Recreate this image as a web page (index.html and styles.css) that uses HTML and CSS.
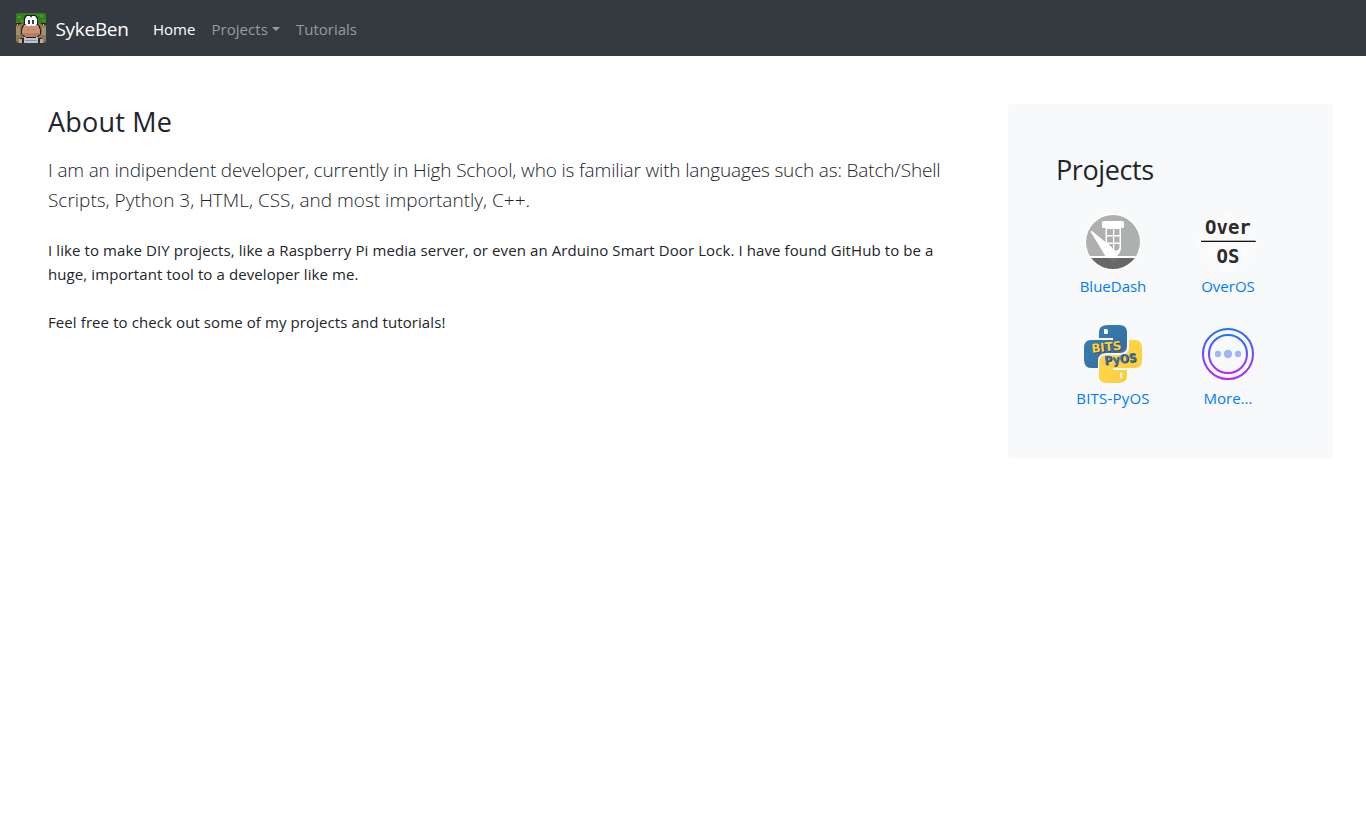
FILE: index.html
```html
<!DOCTYPE html>
<html lang="en">
<head>
<meta charset="utf-8">
<title>SykeBen</title>
<link rel="stylesheet" href="styles.css">
</head>
<body>
<nav class="navbar">
  <a class="brand">
    <svg class="avatar" width="30" height="30" viewBox="0 0 30 30">
      <defs><clipPath id="av"><rect width="30" height="30" rx="3"/></clipPath></defs>
      <g clip-path="url(#av)">
        <rect width="30" height="30" fill="#8a7a5c"/>
        <path d="M0 0H30V9L26 11H4L0 9Z" fill="#33801c"/>
        <path d="M2 3h3v2H2zM24 2h3v2h-3zM5 7h2v2H5zM20 2h3v1h-3zM26 7h3v1h-3z" fill="#4d9f29"/>
        <path d="M0 10h5v2H0zM25 10h5v2h-5z" fill="#29231c"/>
        <path d="M1 11h1v1H1zM27 11h1v1h-1z" fill="#ffe44b"/>
        <path d="M3 11h2v1H3zM25 11h1v1h-1z" fill="#f32b1f"/>
        <path d="M0 14h4v8H0zM26 14h4v8h-4z" fill="#a29069"/>
        <path d="M9 3l1-1h10l2 3v6l2 2 1 4v4l-4 4H9l-4-4v-4l1-4 2-2V5z" fill="#211f20"/>
        <path d="M8 12h14l2 5v4l-4 3H10l-4-3v-4z" fill="#cb9274"/>
        <path d="M7 20h16v1l-3 3H10l-3-3z" fill="#b67e62"/>
        <path d="M9 6l2-3h3l1 2 1-2h3l2 3v5l-2 2h-3l-1-1-1 1h-3l-2-2z" fill="#fff"/>
        <path d="M12 7h2v4h-2zM16 7h2v4h-2z" fill="#34415a"/>
        <path d="M12 16h1v1h-1zM17 16h1v1h-1z" fill="#885946"/>
        <path d="M4 25h22v5H4z" fill="#202b30"/>
        <path d="M8 24h2v1h10v-1h2v6H8z" fill="#b8c6cc"/>
        <path d="M9 27h12v1H9z" fill="#87969d"/>
        <path d="M3 26h3v4H3zM24 26h3v4h-3z" fill="#d8a084"/>
      </g>
    </svg>
    <span class="brand-name">SykeBen</span>
  </a>
  <a class="nav-link active"><span>Home</span></a>
  <a class="nav-link dropdown"><span class="nav-projects">Projects</span></a>
  <a class="nav-link"><span>Tutorials</span></a>
</nav>
<div class="page">
  <main class="about">
    <h1 class="heading heading-about">About Me</h1>
    <p class="lead"><span class="lead-one">I am an indipendent developer, currently in High School, who is familiar with languages such as: Batch/Shell</span><br><span>Scripts, Python 3, HTML, CSS, and most importantly, C++.</span></p>
    <p class="body-text"><span>I like to make DIY projects, like a Raspberry Pi media server, or even an Arduino Smart Door Lock. I have found GitHub to be a</span><br><span>huge, important tool to a developer like me.</span><br><br><span>Feel free to check out some of my projects and tutorials!</span></p>
  </main>
  <aside class="panel">
    <h2 class="heading heading-projects">Projects</h2>
    <div class="projects">
      <a class="project">
        <svg width="60" height="60" viewBox="0 0 60 60">
          <defs><clipPath id="bd"><circle cx="30" cy="30" r="27"/></clipPath></defs>
          <circle cx="30" cy="30" r="28.3" fill="#fff"/>
          <g clip-path="url(#bd)">
            <rect width="60" height="60" fill="#aeb0af"/>
            <path d="M20.500 9h19q1.500 0 1.500 1.500v4q0 1.500-1.500 1.500H38v20q0 5-5 8h-5l-5.500-8V16h-2q-1.500 0-1.500-1.500v-4Q19 9 20.500 9z" fill="#fff"/>
            <path d="M24 17h6v6h-6zM31.300 17h5.200v6h-5.200zM24 24.500h6v6h-6zM31.300 24.500h5.200v6h-5.200zM31.300 32h5.200v4l-2 2.500h-3.200zM25.500 32H30v5zM31.300 40h2l-2 2z" fill="#aeb0af"/>
            <path d="M7.500 19.500l1.500-.5L26 33l9 11v2H23.500z" fill="#fff"/>
            <rect y="44" width="60" height="2" fill="#fff"/>
            <rect y="46" width="60" height="14" fill="#676767"/>
            <path d="M26 46h9l-4 5z" fill="#727272"/>
          </g>
        </svg>
        <span>BlueDash</span>
      </a>
      <a class="project">
        <svg width="60" height="60" viewBox="0 0 60 60">
          <g fill="#fbfbfc"><circle cx="30" cy="30" r="23"/><path d="M26 0h8l3 60H23zM0 25l60 2v7L0 36zM8 11l6-5 38 43-6 5zM46 6l6 5L14 54l-6-5z"/></g>
          <text class="over" x="7" y="22">Over</text>
          <rect x="3" y="28.700" width="54.700" height="1.300" fill="#111"/>
          <text class="over" x="18.500" y="50.500">OS</text>
        </svg>
        <span>OverOS</span>
      </a>
      <a class="project">
        <svg width="60" height="60" viewBox="0 0 60 60">
          <defs>
            <linearGradient id="pb" x1="0" y1="0" x2="1" y2="1"><stop stop-color="#3a7fb8"/><stop offset="1" stop-color="#356a99"/></linearGradient>
            <linearGradient id="py" x1="0" y1="0" x2="1" y2="1"><stop stop-color="#ffdb50"/><stop offset="1" stop-color="#ffc83a"/></linearGradient>
          </defs>
          <path d="M16 14V8q0-7 9-7h11q8 0 8 7v14q0 7-7 7H24q-9 0-9 8v7H8q-7 0-7-9V24q0-8 7-8h22v-2z" fill="url(#pb)"/>
          <path d="M46 16h6q7 0 7 9v11q0 8-7 8H30v2h14v6q0 7-9 7H24q-8 0-8-7V38q0-7 7-7h15q8 0 8-8z" fill="url(#py)"/>
          <path d="M21 5h2q2 0 2 2v2q0 1-2 1h-2zM37 49h2v5h-2z" fill="#fff"/>
          <g transform="rotate(-6 25 22)"><text class="bits shade" x="9" y="27.800" textLength="30" lengthAdjust="spacingAndGlyphs">BITS</text><text class="bits gold" x="8.300" y="27" textLength="30" lengthAdjust="spacingAndGlyphs">BITS</text></g>
          <g transform="rotate(-6 38 37)"><text class="bits shade" x="22" y="39.800" textLength="32.500" lengthAdjust="spacingAndGlyphs">PyOS</text><text class="bits blue" x="21.500" y="39.200" textLength="32.500" lengthAdjust="spacingAndGlyphs">PyOS</text></g>
        </svg>
        <span class="label-bits">BITS-PyOS</span>
      </a>
      <a class="project">
        <svg width="60" height="60" viewBox="0 0 60 60" fill="none">
          <defs>
            <linearGradient id="mg" x1="0" y1="0" x2="0" y2="1"><stop stop-color="#1a70ff"/><stop offset="1" stop-color="#ba25f8"/></linearGradient>
            <linearGradient id="dg" x1="0" y1="0" x2="0" y2="1"><stop stop-color="#7bc3fb"/><stop offset="1" stop-color="#c1aafa"/></linearGradient>
          </defs>
          <circle cx="30" cy="30" r="25" stroke="url(#mg)" stroke-width="2"/>
          <circle cx="30" cy="30" r="19" stroke="url(#mg)" stroke-width="2"/>
          <g fill="url(#dg)"><circle cx="20" cy="30" r="3.200"/><circle cx="30" cy="30" r="4.200"/><circle cx="40" cy="30" r="3.200"/></g>
        </svg>
        <span>More...</span>
      </a>
    </div>
  </aside>
</div>
</body>
</html>
```
FILE: styles.css
```css
* { box-sizing: border-box; }
body { margin: 0; background: #fff; color: #212529; font: 400 15px/24px "Open Sans", "Noto Sans", sans-serif; }
h1, h2, p { margin: 0; }
span { white-space: nowrap; }
svg { display: block; }
.navbar { display: flex; align-items: center; height: 56px; padding: 0 16px; background: #343a40; }
.brand { display: flex; align-items: center; gap: 9.5px; width: 129px; color: #fff; font-size: 19px; line-height: 30px; }
.brand-name { letter-spacing: -0.3px; padding-top: 2px; }
.nav-link { padding: 2px 8px 0; color: #999c9f; }
.nav-link.active { color: #fff; }
.dropdown { display: flex; align-items: center; gap: 4px; }
.nav-projects { letter-spacing: 0.06px; }
.dropdown::after { content: ""; border-top: 4.8px solid; border-left: 4.5px solid transparent; border-right: 4.5px solid transparent; margin-top: -1px; }
.page { display: flex; justify-content: space-between; padding: 48px 33px 0 48px; }
.about { width: 912px; }
.heading { font-size: 27px; font-weight: 400; line-height: 34px; }
.heading-about { padding-top: 1px; letter-spacing: 0.2px; }
.heading-projects { padding-top: 1px; letter-spacing: -0.4px; }
.lead { padding-top: 16px; font-size: 19px; font-weight: 300; line-height: 30px; }
.lead-one { letter-spacing: -0.16px; }
.body-text { margin-top: 23px; letter-spacing: 0.094px; }
.panel { width: 325px; height: 354px; padding: 48px; background: #f8f9fa; border-radius: 4px; }
.projects { display: grid; grid-template-columns: 114px 114px; column-gap: 1px; grid-auto-rows: 112px; margin-top: 25px; }
.project { display: flex; flex-direction: column; align-items: center; gap: 2px; color: #007bff; }
.label-bits { letter-spacing: 0.2px; }
.over { font: 700 19px "DejaVu Sans Mono", monospace; fill: #2b2b2b; }
.bits { font: 700 12px "DejaVu Sans", sans-serif; }
.shade { fill: #3a3d32; }
.gold { fill: #ffd33f; }
.blue { fill: #3973a5; }
```
